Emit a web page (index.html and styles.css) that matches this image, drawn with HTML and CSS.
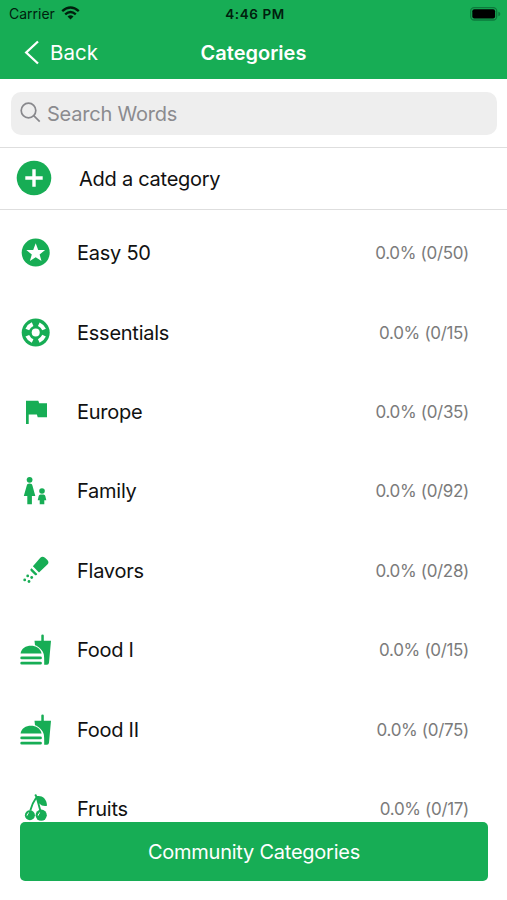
FILE: index.html
```
<!DOCTYPE html>
<html lang="en">
<head>
<meta charset="utf-8">
<title>Categories</title>
<link rel="stylesheet" href="styles.css">
</head>
<body>
<header class="header">
  <div class="status">
    <div class="carrier"><span>Carrier</span>
      <svg class="wifi" width="19" height="14" viewBox="0 0 19 14" fill="none" stroke="#00200d" stroke-width="2.4"><path d="M1.2 5.1Q9.500-2.200 17.800 5.100M4.200 8.300Q9.500 3.700 14.800 8.300"/><path d="M6.500 10.500Q9.500 8 12.500 10.500L9.500 13.500Z" fill="#00200d" stroke="none"/></svg>
    </div>
    <span class="time">4:46 PM</span>
    <svg class="battery" width="31" height="14" viewBox="0 0 31 14"><rect x=".7" y=".7" width="26" height="12.300" rx="3.500" fill="none" stroke="#0d7a3c" stroke-width="1.300"/><rect x="2.300" y="2.200" width="22.800" height="9.300" rx="2" fill="#000"/><path d="M28.300 4.800Q30.300 5.300 30.300 7T28.300 9.200Z" fill="#0d7a3c"/></svg>
  </div>
  <nav class="nav">
    <a class="back"><svg width="16" height="26" viewBox="0 0 16 26" fill="none" stroke="#fff" stroke-width="2.300"><path d="M14 1.500L2.200 12.500L14 23.500"/></svg><span>Back</span></a>
    <h1>Categories</h1>
  </nav>
</header>
<main>
  <div class="search"><svg width="22" height="22" viewBox="0 0 22 22" fill="none" stroke="#88888c" stroke-width="1.700"><circle cx="8.500" cy="8.500" r="7.300"/><path d="M13.700 13.700L19.700 19.700"/></svg><span>Search Words</span></div>
  <div class="add"><svg width="36" height="36" viewBox="0 0 36 36"><circle cx="18" cy="18" r="17.300" fill="#17ad55"/><path d="M18 9.300V26.700M9.300 18H26.700" stroke="#fff" stroke-width="3.400"/></svg><span>Add a category</span></div>
  <ul class="list">
    <li><svg class="icon" viewBox="0 0 36 36"><circle cx="17.700" cy="17.600" r="14"/><path fill="#fff" d="M17.700 8.300L20.200 14.900L27.100 15.100L21.600 19.400L23.500 26.100L17.700 22.200L11.900 26.100L13.800 19.400L8.300 15.100L15.200 14.900Z"/></svg><span class="name">Easy 50</span><span class="score">0.0% (0/50)</span></li>
    <li><svg class="icon" viewBox="0 0 36 36"><circle cx="17.700" cy="17.600" r="14"/><circle cx="17.700" cy="17.600" r="4" fill="#fff"/><g fill="none" stroke="#fff" stroke-width="4"><path id="slot" d="M9.300 14.500Q11 10.800 14.600 9.200"/><use href="#slot" transform="rotate(90 17.700 17.600)"/><use href="#slot" transform="rotate(180 17.700 17.600)"/><use href="#slot" transform="rotate(270 17.700 17.600)"/></g></svg><span class="name">Essentials</span><span class="score">0.0% (0/15)</span></li>
    <li><svg class="icon" viewBox="0 0 36 36"><path d="M8 6.700H20.300L21.200 9.200H29V23.200H19.700L18.900 20.600H10.700V30H8Z"/></svg><span class="name">Europe</span><span class="score">0.0% (0/35)</span></li>
    <li><svg class="icon" viewBox="0 0 36 36"><circle cx="11.600" cy="6.800" r="2.900"/><path d="M11.600 10.500C13.500 10.500 14.100 11.300 14.500 12.700L17.300 22.900H13.900V31.200H9.300V22.900H5.800L8.700 12.700C9.100 11.300 9.700 10.500 11.600 10.500Z"/><circle cx="24" cy="18" r="2.800"/><path d="M22.500 21.500H25.500Q27 21.500 27.300 23L28.300 27.200H26.300V31.200H21.700V27.200H19.700L20.700 23Q21 21.500 22.500 21.500Z"/></svg><span class="name">Family</span><span class="score">0.0% (0/92)</span></li>
    <li><svg class="icon" viewBox="0 0 36 36"><path d="M14.900 13.300L22.300 4.700Q24.400 2.600 27 4.700L29.400 7.100Q31.500 9.400 29.400 11.600L21 19.600ZM13.600 15.300L19.300 21.100Q18.300 23.100 16.700 21.700L12.600 17.700Q11.700 16.300 13.600 15.300Z"/><circle cx="9.700" cy="22.900" r="1.400"/><circle cx="13.700" cy="24.500" r="1.400"/><circle cx="6.700" cy="26.900" r="1.400"/><circle cx="11" cy="28.500" r="1.400"/></svg><span class="name">Flavors</span><span class="score">0.0% (0/28)</span></li>
    <li><svg class="icon" viewBox="0 0 36 36"><g id="meal"><path d="M23.300 8.700V3.500Q23.300 2.500 24.500 2.500Q25.800 2.500 25.800 3.500V8.700H33L31 30.700Q30.800 32.800 29 32.800H26.200Q26.300 25 25.800 22.500C25 18.500 21 14.500 17 13.200L16.500 8.700ZM2.600 21.600C3.700 11 22 11 23.600 21.600Z"/><path d="M3.700 25.900H22.500M3.700 31.200H22.500" stroke="#17ad55" stroke-width="2.800" stroke-linecap="round"/></g></svg><span class="name">Food I</span><span class="score">0.0% (0/15)</span></li>
    <li><svg class="icon" viewBox="0 0 36 36"><use href="#meal"/></svg><span class="name">Food II</span><span class="score">0.0% (0/75)</span></li>
    <li><svg class="icon" viewBox="0 0 36 36"><path fill="none" stroke="#17ad55" stroke-width="1.900" d="M17.200 3.500L18.600 6Q14.300 12 12.300 19.500M18.600 6Q20.500 13 22.300 19.500"/><path d="M18 5.500C22.800 4 28.600 6.500 29 14.800C23.500 16 19.500 12.500 18 5.500Z"/><circle cx="11.900" cy="24.200" r="5"/><circle cx="23.200" cy="24.200" r="5.600"/><path fill="none" stroke="#fff" stroke-width="1" stroke-linecap="round" d="M9.100 24.200Q9.300 22.400 10.600 21.800M20.200 24.200Q20.400 22.400 21.700 21.800"/></svg><span class="name">Fruits</span><span class="score">0.0% (0/17)</span></li>
  </ul>
</main>
<footer class="footer"><button class="community">Community Categories</button></footer>
</body>
</html>
```
FILE: styles.css
```
* { box-sizing: border-box; }
body {
  margin: 0;
  height: 900px;
  display: flex;
  flex-direction: column;
  overflow: hidden;
  background: #fff;
  color: #111;
  font-family: Inter, "Liberation Sans", sans-serif;
}
svg { display: block; flex: none; }
.header { height: 79.400px; flex: none; background: #17ad55; }
.status {
  height: 27px;
  padding: 0 6px 0 9px;
  display: grid;
  grid-template-columns: 1fr auto 1fr;
  align-items: center;
  color: #00200d;
  font-size: 14px;
}
.carrier { display: flex; align-items: center; gap: 6px; }
.wifi { margin-top: -2px; }
.time { font-size: 13.500px; font-weight: 600; letter-spacing: .6px; }
.battery { justify-self: end; }
.nav {
  height: 52px;
  display: grid;
  grid-template-columns: 1fr auto 1fr;
  align-items: center;
  color: #fff;
}
.back { display: flex; align-items: center; gap: 10px; padding-left: 24px; font-size: 20.500px; }
.back span { padding-bottom: 2px; }
h1 { margin: 0; font-size: 20px; font-weight: 600; }
main { flex: 1; min-height: 0; overflow: hidden; }
.search {
  height: 43px;
  margin: 12.600px 10px 12px 11px;
  padding-left: 9px;
  display: flex;
  align-items: center;
  gap: 5px;
  border-radius: 10px;
  background: #eee;
  color: #8b8b8f;
  font-size: 20px;
  letter-spacing: -.22px;
}
.search span, .add span { padding-top: 2px; }
.add {
  height: 63px;
  padding-left: 16px;
  display: flex;
  align-items: center;
  gap: 27px;
  border: solid #dedede;
  border-width: 1px 0;
  font-size: 20px;
  letter-spacing: -.26px;
}
.list { margin: 3.600px 0 0; padding: 0; list-style: none; }
.list li {
  height: 79.400px;
  padding: 0 38px 0 18px;
  display: flex;
  align-items: center;
}
.icon { width: 36px; height: 36px; margin-right: 23px; fill: #17ad55; }
.name { font-size: 20px; letter-spacing: -.25px; }
.score { margin-left: auto; font-size: 17px; letter-spacing: -.32px; color: #7b7b7b; }
.footer { flex: none; height: 78px; padding: 0 19px 19px 20px; background: #fff; }
.community {
  display: block;
  width: 100%;
  height: 59px;
  border: 0;
  border-radius: 5px;
  background: #17ad55;
  color: #fff;
  font: 20px Inter, "Liberation Sans", sans-serif;
  letter-spacing: -.24px;
}
```
